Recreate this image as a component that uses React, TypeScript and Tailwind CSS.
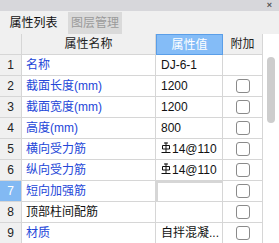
import { Fragment } from "react";

const FONT = { fontFamily: '"Liberation Sans", "Noto Sans CJK SC", sans-serif' };

type Row = { name: string; value: string; rebar?: boolean; black?: boolean; check: boolean; editing?: boolean };

const ROWS: Row[] = [
  { name: "名称", value: "DJ-6-1", check: false },
  { name: "截面长度(mm)", value: "1200", check: true },
  { name: "截面宽度(mm)", value: "1200", check: true },
  { name: "高度(mm)", value: "800", check: true },
  { name: "横向受力筋", value: "14@110", rebar: true, check: true },
  { name: "纵向受力筋", value: "14@110", rebar: true, check: true },
  { name: "短向加强筋", value: "", check: true, editing: true },
  { name: "顶部柱间配筋", value: "", black: true, check: true },
  { name: "材质", value: "自拌混凝...", check: true },
];

function Rebar() {
  return (
    <svg width="10" height="12" viewBox="0 0 10 12" className="mr-[1px] -mt-[2px]">
      <path d="M5 0.5V10.5M1.5 3.5H8.5V7H1.5Z M0.5 10.5H9.5M3 1H7" stroke="#111" strokeWidth="1" fill="none" />
    </svg>
  );
}

export default function App() {
  const cell = "border-r border-b border-[#d6d6d6] h-[21px] flex items-center";
  return (
    <div className="w-[279px] h-[243px] overflow-hidden bg-white text-[12px] text-[#111]" style={FONT}>
      <div className="h-[11px] bg-[#d7d7db] flex justify-end items-center pr-[7px]">
        <span className="text-[9px] leading-none text-[#555] font-bold">×</span>
      </div>
      <div className="h-[23px] bg-[#f0f0f0] flex items-end">
        <div className="h-[22px] w-[67px] flex items-center justify-center text-[#111] text-[12px]">属性列表</div>
        <div className="h-[22px] w-[54px] ml-[1px] bg-[#dadada] flex items-center justify-center text-[#9a9a9a]">图层管理</div>
      </div>
      <div className="flex">
        <div className="grid grid-cols-[22px_134px_67px_40px] w-[263px]">
          <div className={`${cell} bg-[#f0f0f0]`} />
          <div className={`${cell} bg-[#f0f0f0] justify-center text-[#222]`}>属性名称</div>
          <div className="h-[21px] bg-[#84bcf7] border border-[#5a9ee8] flex items-center justify-center text-white">属性值</div>
          <div className={`${cell} bg-[#f0f0f0] justify-center text-[#222]`}>附加</div>
          {ROWS.map((r, i) => (
            <Fragment key={i}>
              <div className={`${cell} justify-center ${r.editing ? "bg-[#82b9f3] text-white" : "bg-[#f0f0f0] text-[#222]"}`}>{i + 1}</div>
              <div className={`${cell} pl-[4px] ${r.black ? "text-[#111]" : "text-[#2346d8]"}`}>{r.name}</div>
              <div className={`${cell} ${r.editing ? "border-2 border-[#7c7c7c]" : "pl-[5px]"}`}>
                {r.rebar && <Rebar />}
                {r.value}
              </div>
              <div className={`${cell} justify-center`}>
                {r.check && <div className="w-[14px] h-[14px] border border-[#8a8a8a] rounded-[3px] bg-white" />}
              </div>
            </Fragment>
          ))}
        </div>
        <div className="w-[16px] flex justify-center pt-[23px]">
          <div className="w-[8px] h-[66px] bg-[#cdcdcd] rounded-[4px]" />
        </div>
      </div>
    </div>
  );
}
